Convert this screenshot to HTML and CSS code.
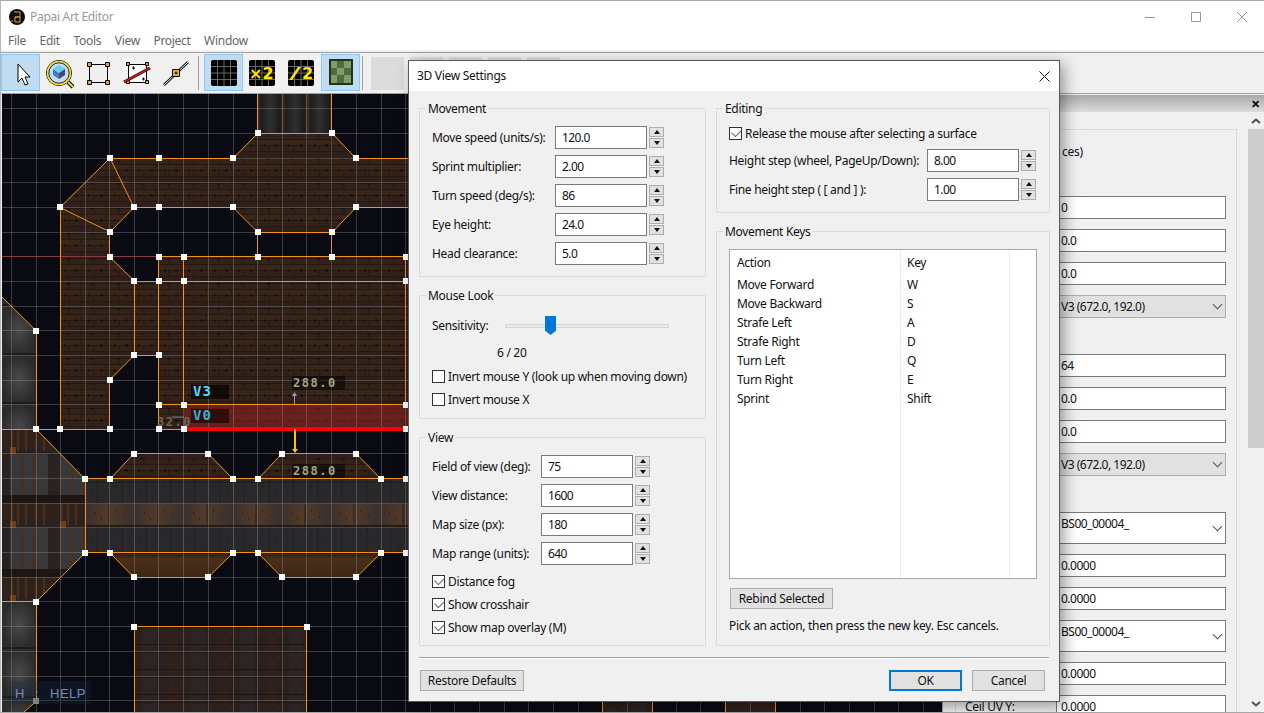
FILE: index.html
```html
<!DOCTYPE html>
<html lang="en">

<head>
    <meta charset="UTF-8">
    <link rel="stylesheet" href="styles.css">
    <title>Papai Art Editor</title>
</head>

<body>
    <div class="app">
        <div class="titlebar">
            <svg class="app-icon" width="16" height="16" viewBox="0 0 16 16">
                <circle cx="8" cy="8" r="8" fill="#0c0c0c" />
                <path d="M5 3h6v5h-5v5h5M6 8h5v5" fill="none" stroke="#d8a52a" stroke-width="1" />
                <path d="M2 12h2" stroke="#b03020" stroke-width="2" />
            </svg>
            <span class="app-name">Papai Art Editor</span>
            <div class="caption">
                <svg width="10" height="10" viewBox="0 0 10 10"><path d="M0 5.500h10" stroke="#999" /></svg>
                <svg width="10" height="10" viewBox="0 0 10 10"><path d="M.5.5h9v9h-9z" fill="none" stroke="#999" /></svg>
                <svg width="10" height="10" viewBox="0 0 10 10"><path d="M0 0l10 10M10 0L0 10" stroke="#999" /></svg>
            </div>
        </div>

        <div class="menubar">
            <span>File</span>
            <span>Edit</span>
            <span>Tools</span>
            <span>View</span>
            <span>Project</span>
            <span>Window</span>
        </div>

        <div class="toolbar">
            <div class="tool on">
                <svg viewBox="0 0 37 35"><path d="M16 9v18l4-4 3 7 3-1-3-7h5z" fill="#fff" stroke="#000" /></svg>
            </div>
            <div class="tool">
                <svg viewBox="0 0 37 35">
                    <path d="M27 27l5 5" stroke="#000" stroke-width="4" />
                    <path d="M27 27l5 5" stroke="#f4e01c" stroke-width="2" />
                    <circle cx="18" cy="18" r="12.500" fill="#c9d9ef" stroke="#000" />
                    <circle cx="18" cy="18" r="11.500" fill="none" stroke="#f4e01c" stroke-width="1.500" />
                    <circle cx="18" cy="18" r="10.200" fill="none" stroke="#000" stroke-width=".8" />
                    <path d="M18 10l6 3.500-6 4-6-4z" fill="#5fd0ee" />
                    <path d="M12 14l6 4v6l-6-4z" fill="#4a78c8" />
                    <path d="M24 14l-6 4v6l6-4z" fill="#3a4a80" />
                </svg>
            </div>
            <div class="tool">
                <svg viewBox="0 0 37 35">
                    <path d="M9.500 9.500h18v18h-18z" fill="#efefef" stroke="#000" />
                    <path d="M7.500 7.500h4v4h-4zM25.500 7.500h4v4h-4zM7.500 25.500h4v4h-4zM25.500 25.500h4v4h-4z" fill="#f0a020" stroke="#000" />
                </svg>
            </div>
            <div class="tool">
                <svg viewBox="0 0 37 35">
                    <path d="M9.500 9.500h18v18h-18z" fill="#fff" stroke="#000" />
                    <path d="M7.500 7.500h3v3h-3zM26.500 7.500h3v3h-3zM7.500 25.500h3v3h-3zM26.500 25.500h3v3h-3z" fill="#f0a020" stroke="#000" />
                    <path d="M5 27l26-14" stroke="#111" stroke-width="3" />
                    <path d="M5 27l26-14" stroke="#d01818" stroke-width="1.600" />
                    <path d="M13 13h3M14.500 11.500v3M23 24h3M24.500 22.500v3" stroke="#000" />
                </svg>
            </div>
            <div class="tool">
                <svg viewBox="0 0 37 35">
                    <path d="M6 30L30 7" stroke="#111" stroke-width="2.500" />
                    <path d="M6 30L30 7" stroke="#eee" stroke-width="1" />
                    <path d="M14.500 14.500h7v7h-7z" fill="#f0b020" stroke="#000" />
                    <path d="M16.500 18h3M18 16.500v3" stroke="#000" />
                </svg>
            </div>
            <div class="tool-sep"></div>
            <div class="tool on">
                <svg viewBox="0 0 37 35">
                    <rect x="6" y="5" width="26" height="26" rx="2" fill="#000" />
                    <path d="M12.500 5v26M19 5v26M25.500 5v26M6 11.500h26M6 18h26M6 24.500h26" stroke="#666" />
                </svg>
            </div>
            <div class="tool">
                <svg viewBox="0 0 37 35">
                    <rect x="5" y="5" width="26" height="26" rx="2" fill="#000" />
                    <path d="M11.500 5v26M18 5v26M24.500 5v26M5 11.500h26M5 18h26M5 24.500h26" stroke="#666" />
                    <text class="icon-num" x="5" y="24">×2</text>
                </svg>
            </div>
            <div class="tool">
                <svg viewBox="0 0 37 35">
                    <rect x="5" y="5" width="26" height="26" rx="2" fill="#000" />
                    <path d="M11.500 5v26M18 5v26M24.500 5v26M5 11.500h26M5 18h26M5 24.500h26" stroke="#666" />
                    <text class="icon-slash" transform="translate(6 24) scale(2.200 1)">/</text>
                    <text class="icon-num" x="19" y="24">2</text>
                </svg>
            </div>
            <div class="tool on">
                <svg viewBox="0 0 37 35">
                    <rect x="7" y="4" width="24" height="26" fill="#26301f" />
                    <rect x="9" y="6" width="20" height="22" fill="#7f9d6b" />
                    <path d="M15 6h7v7h-7zM22 13h7v7h-7zM15 20h7v8h-7zM9 13h6v7H9z" fill="#4f6c3d" />
                </svg>
            </div>
            <div class="tool-sep last"></div>
            <div class="tool-off"></div>
            <div class="tool-off"></div>
            <div class="tool-off"></div>
            <div class="tool-off"></div>
            <div class="tool-off"></div>
        </div>

        <div class="workspace">
            <svg class="map" width="940" height="618" viewBox="2 94 940 618">
                <defs>
                    <pattern id="brick" patternUnits="userSpaceOnUse" x="11" y="108" width="50" height="25">
                        <rect width="50" height="25" fill="#33221a" />
                        <rect y="6" width="50" height="6" fill="#38261b" />
                        <rect y="18" width="50" height="6" fill="#2f1f18" />
                        <path d="M0 .5h50M0 6.500h50M0 12.500h50M0 18.500h50" stroke="#261810" />
                        <path d="M8 0v6M33 0v6M20 6v6M45 6v6M8 12v6M33 12v6M20 18v7M45 18v7" stroke="#241610" />
                        <path d="M3 12.500h2M14 12.500h3M27 12.500h2M39 12.500h3M6 .5h3M30 .5h2" stroke="#160d08" stroke-width="2" />
                    </pattern>
                    <linearGradient id="rustband" x1="0" x2="1" y1="0" y2="0">
                        <stop offset="0" stop-color="#3a302c" />
                        <stop offset=".45" stop-color="#523a28" />
                        <stop offset="1" stop-color="#3a302e" />
                    </linearGradient>
                    <pattern id="metal" patternUnits="userSpaceOnUse" x="85" y="479" width="49" height="74">
                        <rect width="49" height="74" fill="#29292c" />
                        <rect y="25" width="49" height="24" fill="url(#rustband)" />
                        <rect y="3" width="49" height="1" fill="#1e1e20" />
                        <rect y="46" width="49" height="3" fill="#231a16" />
                        <rect y="71" width="49" height="3" fill="#33261e" />
                        <path d="M12 0v25M37 0v25M12 49v25M37 49v25M24 25v24" stroke="#1e1e20" />
                        <path d="M6 12h1M30 8h1M18 18h1M44 14h1M6 60h1M30 56h1M18 66h1M44 62h1M10 34h1M30 32h1M16 40h1M38 38h1" stroke="#0e0e0e" />
                    </pattern>
                    <pattern id="plate" patternUnits="userSpaceOnUse" x="2" y="429" width="50" height="74">
                        <rect width="50" height="74" fill="#292220" />
                        <rect x="8" y="25" width="38" height="42" fill="#38383a" />
                        <rect x="0" y="0" width="50" height="18" fill="#2e221b" />
                        <path d="M10 0v22M16 0v22M24 0v22M34 0v22M42 0v22M20 26v40M32 26v40" stroke="#4e2e1a" stroke-width="2" />
                        <rect x="8" y="18" width="6" height="7" fill="#6a4018" />
                        <rect y="66" width="50" height="8" fill="#1e1612" />
                    </pattern>
                    <radialGradient id="steelspot">
                        <stop offset="0" stop-color="#4a4a4c" />
                        <stop offset="1" stop-color="#2c2b2b" />
                    </radialGradient>
                    <pattern id="steel" patternUnits="userSpaceOnUse" x="2" y="306" width="34" height="49">
                        <rect width="34" height="49" fill="url(#steelspot)" />
                        <rect y="47" width="34" height="2" fill="#1c1c1c" />
                    </pattern>
                    <pattern id="dark" patternUnits="userSpaceOnUse" x="134" y="627" width="49" height="25">
                        <rect width="49" height="25" fill="#2a201d" />
                        <rect x="8" width="14" height="25" fill="#2b2625" />
                        <rect x="34" y="8" width="10" height="17" fill="#33201a" />
                        <path d="M0 .5h49M0 17.500h49" stroke="#1e1512" />
                        <path d="M0 6h49" stroke="#38211a" stroke-width="2" stroke-dasharray="4 5" />
                    </pattern>
                    <linearGradient id="pipe" x1="0" x2="1" y1="0" y2="0">
                        <stop offset="0" stop-color="#46301f" />
                        <stop offset=".12" stop-color="#1d1c1d" />
                        <stop offset=".5" stop-color="#2f2f31" />
                        <stop offset=".9" stop-color="#1b1a1b" />
                        <stop offset="1" stop-color="#46301f" />
                    </linearGradient>
                    <pattern id="pipes" patternUnits="userSpaceOnUse" x="258" y="94" width="24.670" height="39">
                        <rect width="24.670" height="39" fill="url(#pipe)" />
                    </pattern>
                    <linearGradient id="bumpdown" x1="0" x2="0" y1="0" y2="1">
                        <stop offset="0" stop-color="#2e1c10" />
                        <stop offset=".25" stop-color="#4a2e1a" />
                        <stop offset="1" stop-color="#3e2616" />
                    </linearGradient>
                </defs>

                <rect x="2" y="94" width="940" height="618" fill="#0a0b12" />

                <!-- sectors -->
                <rect x="258" y="94" width="74" height="39" fill="url(#pipes)" />
                <path fill="url(#brick)" d="M110 158H233L258 133H332L356 158H410V207H356L332 232H258L233 207H134L110 232L60 207Z" />
                <path fill="url(#brick)" d="M60 207L110 232V257L134 281V355L110 380V429H60Z" />
                <path fill="url(#brick)" d="M134 281H159V257H410V429H159V355H134Z" />
                <path fill="url(#steel)" d="M2 297L36 331V429H2Z" />
                <path fill="url(#plate)" d="M2 429H36L85 479V553L36 602H2Z" />
                <path fill="url(#steel)" d="M2 602H36V701L24 712H2Z" />
                <rect x="85" y="479" width="325" height="74" fill="url(#metal)" />
                <path fill="url(#brick)" d="M110 479L134 454H208L233 479ZM258 479L282 454H356L381 479Z" />
                <path fill="url(#bumpdown)" d="M110 553L134 577H208L233 553ZM258 553L282 577H356L381 553Z" />
                <rect x="134" y="627" width="173" height="85" fill="url(#dark)" />
                <rect x="603" y="694" width="49" height="18" fill="url(#dark)" />
                <rect x="725" y="694" width="50" height="18" fill="#33201a" />

                <!-- selected wall -->
                <rect x="184" y="405" width="226" height="24" fill="#8a2020" opacity=".6" />

                <!-- grid -->
                <path class="grid" d="M11.500 94V712M36.500 94V712M60.500 94V712M85.500 94V712M109.500 94V712M134.500 94V712M158.500 94V712M183.500 94V712M208.500 94V712M233.500 94V712M257.500 94V712M282.500 94V712M306.500 94V712M331.500 94V712M356.500 94V712M381.500 94V712M405.500 94V712M430.500 94V712M454.500 94V712M479.500 94V712M504.500 94V712M528.500 94V712M553.500 94V712M578.500 94V712M602.500 94V712M627.500 94V712M652.500 94V712M676.500 94V712M700.500 94V712M725.500 94V712M750.500 94V712M775.500 94V712M800.500 94V712M824.500 94V712M849.500 94V712M874.500 94V712M898.500 94V712M923.500 94V712M2 108.500H942M2 133.500H942M2 158.500H942M2 182.500H942M2 207.500H942M2 232.500H942M2 281.500H942M2 306.500H942M2 330.500H942M2 355.500H942M2 380.500H942M2 404.500H942M2 429.500H942M2 453.500H942M2 478.500H942M2 503.500H942M2 527.500H942M2 552.500H942M2 577.500H942M2 601.500H942M2 626.500H942M2 651.500H942M2 676.500H942M2 700.500H942" />
                <path class="axis" d="M2 256.500H159" />

                <!-- walls -->
                <path class="wall" d="M257.500 94V133.500H331.500V94M110 158.500H233L258 133M332 133L356 158.500H410M60 207.500L110 158L134 207.500H233L258 232.500H332L356 207.500H410M60 207.500L110 232L134 207.500M60.500 207V429.500H110M109.500 232V257L134.500 281V355L109.500 380V429M134 281.500H410M158.500 257V429.500M183.500 257V405M158 256.500H410M158 355.500H134M158 404.500H410M158 429.500H184M257.500 232V257M331.500 232V257M405.500 257V405" />
                <path class="wall" d="M2 297L36.500 331V429.500H2M36 429.500H60M36 429L85 479M85.500 479V553M85 478.500H410M85 552.500H410M36 602L85 553M2 601.500H36M36.500 602V701L24 712M110 479L134 453.500H208L233 479M258 479L282 453.500H356L381 479M110 553L134 577.500H208L233 553M258 553L282 577.500H356L381 553M134.500 712V626.500H306.500V712M602.500 700V712M652.500 700V712M725.500 700V712M775.500 700V712" />
                <rect x="186" y="427" width="224" height="4" fill="#ff0000" />

                <!-- vertices -->
                <path class="verts" d="M255 130h6v6h-6zM329 130h6v6h-6zM107 155h6v6h-6zM156 155h6v6h-6zM230 155h6v6h-6zM353 155h6v6h-6zM57 204h6v6h-6zM131 204h6v6h-6zM156 204h6v6h-6zM230 204h6v6h-6zM353 204h6v6h-6zM107 229h6v6h-6zM255 229h6v6h-6zM329 229h6v6h-6zM107 254h6v6h-6zM156 254h6v6h-6zM181 254h6v6h-6zM255 254h6v6h-6zM329 254h6v6h-6zM403 254h6v6h-6zM131 278h6v6h-6zM156 278h6v6h-6zM181 278h6v6h-6zM403 278h6v6h-6zM33 328h6v6h-6zM131 352h6v6h-6zM156 352h6v6h-6zM107 377h6v6h-6zM156 402h6v6h-6zM181 402h6v6h-6zM403 402h6v6h-6zM33 426h6v6h-6zM57 426h6v6h-6zM107 426h6v6h-6zM156 426h6v6h-6zM181 426h6v6h-6zM403 426h6v6h-6zM131 451h6v6h-6zM205 451h6v6h-6zM279 451h6v6h-6zM353 451h6v6h-6zM82 476h6v6h-6zM107 476h6v6h-6zM230 476h6v6h-6zM255 476h6v6h-6zM378 476h6v6h-6zM403 476h6v6h-6zM82 550h6v6h-6zM107 550h6v6h-6zM230 550h6v6h-6zM255 550h6v6h-6zM378 550h6v6h-6zM403 550h6v6h-6zM131 574h6v6h-6zM205 574h6v6h-6zM279 574h6v6h-6zM353 574h6v6h-6zM33 599h6v6h-6zM131 624h6v6h-6zM304 624h6v6h-6z" />

                <!-- helpers and labels -->
                <rect x="191" y="385" width="38" height="14" fill="#000" opacity=".65" />
                <rect x="191" y="409" width="38" height="14" fill="#000" opacity=".55" />
                <rect x="292" y="376" width="53" height="14" fill="#000" opacity=".5" />
                <rect x="292" y="464" width="53" height="14" fill="#000" opacity=".5" />
                <text class="tag tag-v" x="193" y="396">V3</text>
                <text class="tag tag-v dim" x="193" y="420">V0</text>
                <text class="tag tag-len" x="293" y="387">288.0</text>
                <text class="tag tag-len" x="293" y="475">288.0</text>
                <text class="tag tag-len faint" x="157" y="426">32.0</text>
                <path d="M294.500 404V393" stroke="#9a94d0" />
                <path d="M292 396l2.500-4 2.500 4z" fill="#9a94d0" />
                <path d="M172 417h12" stroke="#7c7c90" />
                <path d="M295 429V452" stroke="#ffc400" stroke-width="2" />
                <path d="M292 449h6l-3 4z" fill="#ffc400" />
                <rect x="10" y="681" width="81" height="23" fill="#1a2a4a" opacity=".3" />
                <path d="M33 698h6v6h-6z" fill="#808080" />
                <text class="help" y="698"><tspan x="15">H</tspan> <tspan x="35">:</tspan> <tspan x="50">HELP</tspan></text>
            </svg>

            <div class="panel">
                <div class="dock-title"><span>✕</span></div>
                <div class="dock-body">
                    <div class="props">
                        <div class="props-note">ces)</div>
                        <div class="prop"><span class="prop-label"></span><div class="prop-field">0</div></div>
                        <div class="prop"><span class="prop-label"></span><div class="prop-field">0.0</div></div>
                        <div class="prop"><span class="prop-label"></span><div class="prop-field">0.0</div></div>
                        <div class="prop"><span class="prop-label"></span><div class="prop-field grey">V3 (672.0, 192.0)<i class="chev"></i></div></div>
                        <div class="prop"><span class="prop-label"></span><div class="prop-field">64</div></div>
                        <div class="prop"><span class="prop-label"></span><div class="prop-field">0.0</div></div>
                        <div class="prop"><span class="prop-label"></span><div class="prop-field">0.0</div></div>
                        <div class="prop"><span class="prop-label"></span><div class="prop-field grey">V3 (672.0, 192.0)<i class="chev"></i></div></div>
                        <div class="prop"><span class="prop-label"></span><div class="prop-field tall">BS00_00004_<i class="chev"></i></div></div>
                        <div class="prop"><span class="prop-label"></span><div class="prop-field">0.0000</div></div>
                        <div class="prop"><span class="prop-label"></span><div class="prop-field">0.0000</div></div>
                        <div class="prop"><span class="prop-label"></span><div class="prop-field tall">BS00_00004_<i class="chev"></i></div></div>
                        <div class="prop"><span class="prop-label"></span><div class="prop-field">0.0000</div></div>
                        <div class="prop"><span class="prop-label">Ceil UV Y:</span><div class="prop-field">0.0000</div></div>
                    </div>
                    <div class="scrollbar">
                        <div class="scroll-btn">
                            <svg width="10" height="6" viewBox="0 0 10 6"><path d="M1 5l4-3.500L9 5" fill="none" stroke="#505050" stroke-width="2" /></svg>
                        </div>
                        <div class="scroll-thumb"></div>
                        <div class="scroll-btn end">
                            <svg width="10" height="6" viewBox="0 0 10 6"><path d="M1 1l4 3.500L9 1" fill="none" stroke="#505050" stroke-width="2" /></svg>
                        </div>
                    </div>
                </div>
            </div>
        </div>
    </div>

    <div class="dialog">
        <div class="dialog-title">
            <span>3D View Settings</span>
            <svg width="11" height="11" viewBox="0 0 11 11"><path d="M.5.5l10 10M10.500.5l-10 10" stroke="#111" /></svg>
        </div>

        <div class="dialog-body">
            <div class="col-left">
                <div class="group movement">
                    <div class="group-title">Movement</div>
                    <div class="spin-rows">
                        <div class="spin-row"><span class="spin-label">Move speed (units/s):</span><div class="field">120.0</div><div class="spin"><b class="up"></b><b class="down"></b></div></div>
                        <div class="spin-row"><span class="spin-label">Sprint multiplier:</span><div class="field">2.00</div><div class="spin"><b class="up"></b><b class="down"></b></div></div>
                        <div class="spin-row"><span class="spin-label">Turn speed (deg/s):</span><div class="field">86</div><div class="spin"><b class="up"></b><b class="down"></b></div></div>
                        <div class="spin-row"><span class="spin-label">Eye height:</span><div class="field">24.0</div><div class="spin"><b class="up"></b><b class="down"></b></div></div>
                        <div class="spin-row"><span class="spin-label">Head clearance:</span><div class="field">5.0</div><div class="spin"><b class="up"></b><b class="down"></b></div></div>
                    </div>
                </div>

                <div class="group mouselook">
                    <div class="group-title">Mouse Look</div>
                    <div class="slider-row">
                        <span class="slider-label">Sensitivity:</span>
                        <div class="slider"><div class="slider-thumb"></div></div>
                    </div>
                    <div class="slider-value">6 / 20</div>
                    <div class="checks">
                        <label class="check-row"><i class="check"></i>Invert mouse Y (look up when moving down)</label>
                        <label class="check-row"><i class="check"></i>Invert mouse X</label>
                    </div>
                </div>

                <div class="group view">
                    <div class="group-title">View</div>
                    <div class="spin-rows">
                        <div class="spin-row"><span class="spin-label">Field of view (deg):</span><div class="field">75</div><div class="spin"><b class="up"></b><b class="down"></b></div></div>
                        <div class="spin-row"><span class="spin-label">View distance:</span><div class="field">1600</div><div class="spin"><b class="up"></b><b class="down"></b></div></div>
                        <div class="spin-row"><span class="spin-label">Map size (px):</span><div class="field">180</div><div class="spin"><b class="up"></b><b class="down"></b></div></div>
                        <div class="spin-row"><span class="spin-label">Map range (units):</span><div class="field">640</div><div class="spin"><b class="up"></b><b class="down"></b></div></div>
                    </div>
                    <div class="checks">
                        <label class="check-row"><i class="check on"></i>Distance fog</label>
                        <label class="check-row"><i class="check on"></i>Show crosshair</label>
                        <label class="check-row"><i class="check on"></i>Show map overlay (M)</label>
                    </div>
                </div>
            </div>

            <div class="col-right">
                <div class="group editing">
                    <div class="group-title">Editing</div>
                    <label class="check-row release"><i class="check on"></i>Release the mouse after selecting a surface</label>
                    <div class="spin-rows">
                        <div class="spin-row"><span class="spin-label">Height step (wheel, PageUp/Down):</span><div class="field">8.00</div><div class="spin"><b class="up"></b><b class="down"></b></div></div>
                        <div class="spin-row"><span class="spin-label">Fine height step ( [ and ] ):</span><div class="field">1.00</div><div class="spin"><b class="up"></b><b class="down"></b></div></div>
                    </div>
                </div>

                <div class="group keys">
                    <div class="group-title">Movement Keys</div>
                    <div class="keylist">
                        <div class="key-col action">
                            <div class="key-head">Action</div>
                            <div>Move Forward</div>
                            <div>Move Backward</div>
                            <div>Strafe Left</div>
                            <div>Strafe Right</div>
                            <div>Turn Left</div>
                            <div>Turn Right</div>
                            <div>Sprint</div>
                        </div>
                        <div class="key-col bind">
                            <div class="key-head">Key</div>
                            <div>W</div>
                            <div>S</div>
                            <div>A</div>
                            <div>D</div>
                            <div>Q</div>
                            <div>E</div>
                            <div>Shift</div>
                        </div>
                        <div class="key-col"></div>
                    </div>
                    <div class="btn rebind">Rebind Selected</div>
                    <div class="keys-hint">Pick an action, then press the new key. Esc cancels.</div>
                </div>
            </div>
        </div>

        <div class="dialog-line"></div>

        <div class="dialog-foot">
            <div class="btn restore">Restore Defaults</div>
            <div class="foot-right">
                <div class="btn ok">OK</div>
                <div class="btn cancel">Cancel</div>
            </div>
        </div>
    </div>
</body>

</html>
```

FILE: styles.css
```css
* {
    margin: 0;
    padding: 0;
    box-sizing: border-box;
}

body {
    width: 1264px;
    height: 713px;
    position: relative;
    overflow: hidden;
    background: #f0f0f0;
    font-family: "Noto Sans", "Liberation Sans", sans-serif;
    font-size: 12px;
    line-height: 16px;
    letter-spacing: -.3px;
    color: #111;
}

.app {
    height: 713px;
    display: flex;
    flex-direction: column;
    border-top: 1px solid #a8a8a8;
    border-left: 1px solid #b8b8b8;
    border-bottom: 1px solid #a8a8a8;
}

/* window chrome */
.titlebar {
    height: 32px;
    flex: none;
    display: flex;
    align-items: center;
    padding-left: 8px;
    background: #fff;
}

.app-name {
    margin-left: 5px;
    color: #999;
}

.caption {
    margin-left: auto;
    display: flex;
    gap: 36px;
    padding-right: 17px;
}

.menubar {
    height: 19px;
    flex: none;
    display: flex;
    gap: 13.600px;
    padding: 0 0 0 7px;
    background: #fff;
    border-bottom: 2px solid #f0f0f0;
    color: #666;
}

.toolbar {
    height: 42px;
    flex: none;
    display: flex;
    align-items: flex-start;
    padding-top: 1px;
    background: #f0f0f0;
    border-top: 1px solid #a0a0a0;
    border-bottom: 1px solid #a0a0a0;
}

.tool {
    width: 39px;
    height: 37px;
    flex: none;
    border: 1px solid transparent;
}

.tool svg {
    display: block;
    width: 37px;
    height: 35px;
}

.tool.on {
    background: #bfdcf3;
    border-color: #8fc8f0;
}

.tool-sep {
    width: 1px;
    height: 34px;
    margin: 2px 5px 0 2px;
    background: #a0a0a0;
}

.tool-sep.last {
    margin: 2px 8px 0 2px;
}

.tool-off {
    width: 33px;
    height: 33px;
    margin: 3px 6px 0 0;
    flex: none;
    background: #dcdcdc;
}

.icon-num {
    font-family: "DejaVu Sans", sans-serif;
    font-size: 16px;
    font-weight: 700;
    letter-spacing: 0;
    fill: #ffe600;
}

.icon-slash {
    font-family: "DejaVu Sans", sans-serif;
    font-size: 16px;
    fill: #ffe600;
}

/* map */
.workspace {
    flex: 1;
    display: flex;
    padding-left: 1px;
    min-height: 0;
}

.map {
    display: block;
    flex: none;
}

.grid {
    fill: none;
    stroke: rgba(160, 160, 160, .33);
}

.axis {
    stroke: #8a3a44;
}

.wall {
    fill: none;
    stroke: #f0941c;
}

.verts {
    fill: #fff;
}

.tag {
    font-family: "DejaVu Sans Mono", monospace;
    font-size: 12px;
    letter-spacing: 0;
}

.tag-v {
    font-weight: 700;
    font-size: 14px;
    letter-spacing: 1px;
    fill: #55d8ff;
}

.tag-v.dim {
    fill: #3fb0cc;
}

.tag-len {
    font-weight: 700;
    letter-spacing: 1.500px;
    fill: #a5a583;
}

.tag-len.faint {
    fill: #6c6850;
}

.help {
    font-family: "Liberation Sans", sans-serif;
    font-size: 13px;
    letter-spacing: .5px;
    fill: #6f8fc8;
}

/* dock on the right */
.panel {
    flex: 1;
    display: flex;
    flex-direction: column;
    border-left: 1px solid #a0a0a0;
    padding-top: 1px;
    min-width: 0;
}

.dock-title {
    height: 17px;
    flex: none;
    display: flex;
    justify-content: flex-end;
    align-items: center;
    padding-right: 4px;
    background: linear-gradient(#a8a8a8, #dcdcdc);
    font-size: 11px;
    font-weight: 700;
    color: #000;
}

.dock-body {
    flex: 1;
    display: flex;
    min-height: 0;
}

.props {
    width: 294px;
    margin: 17px 11px 0 12px;
    padding: 0 10px 0 0;
    border: 1px solid #dcdcdc;
    border-bottom: 0;
    overflow: hidden;
}

.props-note {
    margin: 14px 0 36px 106px;
}

.prop {
    display: flex;
    margin-bottom: 10px;
}

.prop-label {
    width: 100px;
    flex: none;
    padding-left: 9px;
    line-height: 23px;
}

.prop-field {
    flex: 1;
    height: 23px;
    position: relative;
    padding-left: 4px;
    line-height: 21px;
    letter-spacing: -.5px;
    background: #fff;
    border: 1px solid #7a7a7a;
}

.prop-field.grey {
    background: #e1e1e1;
    border-color: #adadad;
    margin-bottom: 26px;
}

.prop-field.tall {
    height: 32px;
}

.chev {
    position: absolute;
    right: 4px;
    top: 5px;
    width: 7px;
    height: 7px;
    border: solid #555;
    border-width: 0 1px 1px 0;
    transform: rotate(45deg);
}

.tall .chev {
    top: 10px;
}

.scrollbar {
    width: 16px;
    flex: none;
    display: flex;
    flex-direction: column;
    background: #f0f0f0;
}

.scroll-btn {
    height: 17px;
    flex: none;
    display: flex;
    align-items: center;
    justify-content: center;
}

.scroll-btn.end {
    margin-top: auto;
}

.scroll-thumb {
    height: 319px;
    background: #cdcdcd;
}

/* settings dialog */
.dialog {
    position: absolute;
    left: 408px;
    top: 60px;
    width: 652px;
    height: 642px;
    background: #f0f0f0;
    border: 1px solid #5a5a5a;
    box-shadow: 4px 4px 14px rgba(0, 0, 0, .38);
}

.dialog-title {
    height: 30px;
    display: flex;
    align-items: center;
    justify-content: space-between;
    padding: 0 9px 0 8px;
    background: #fff;
}

.dialog-body {
    display: flex;
    gap: 10px;
    padding: 17px 0 0 10px;
}

.col-left,
.col-right {
    display: flex;
    flex-direction: column;
    gap: 18px;
}

.col-left {
    width: 287px;
}

.col-right {
    width: 334px;
}

.group {
    border: 1px solid #dcdcdc;
    padding: 0 0 11px 12px;
}

.mouselook {
    padding-bottom: 12px;
}

.group-title {
    width: max-content;
    margin: -8px 0 9px -6px;
    padding: 0 2px;
    background: #f0f0f0;
}

.spin-rows {
    display: flex;
    flex-direction: column;
    gap: 6px;
}

.spin-row {
    display: flex;
    align-items: center;
}

.spin-label {
    width: 123px;
    flex: none;
    white-space: nowrap;
}

.view .spin-label {
    width: 109px;
}

.editing .spin-label {
    width: 198px;
}

.field {
    width: 92px;
    height: 23px;
    padding-left: 6px;
    line-height: 21px;
    letter-spacing: -.6px;
    background: #fff;
    border: 1px solid #7a7a7a;
}

.spin {
    width: 15px;
    margin-left: 2px;
    display: flex;
    flex-direction: column;
    gap: 1px;
}

.spin b {
    height: 10px;
    display: flex;
    align-items: center;
    justify-content: center;
    background: #e1e1e1;
    border: 1px solid #adadad;
}

.spin b::after {
    content: "";
    border-left: 3.500px solid transparent;
    border-right: 3.500px solid transparent;
}

.spin .up::after {
    border-bottom: 4px solid #111;
}

.spin .down::after {
    border-top: 4px solid #111;
}

.slider-row {
    display: flex;
    align-items: center;
    height: 20px;
    margin-top: 12px;
}

.slider-label {
    width: 73px;
    flex: none;
}

.slider {
    width: 164px;
    height: 4px;
    position: relative;
    background: #e7eaea;
    border: 1px solid #d6d6d6;
}

.slider-thumb {
    position: absolute;
    left: 39px;
    top: -9px;
    width: 11px;
    height: 19px;
    background: #0078d7;
    clip-path: polygon(0 0, 100% 0, 100% 78%, 50% 100%, 0 78%);
}

.slider-value {
    margin: 9px 0 0 65px;
}

.checks {
    display: flex;
    flex-direction: column;
    gap: 10px;
    margin-top: 9px;
}

.view .checks {
    margin-top: 10px;
}

.check-row {
    height: 13px;
    display: flex;
    align-items: center;
    gap: 3px;
    white-space: nowrap;
}

.check {
    width: 13px;
    height: 13px;
    flex: none;
    position: relative;
    background: #fff;
    border: 1px solid #333;
}

.check.on::after {
    content: "";
    position: absolute;
    left: 2px;
    top: 1px;
    width: 8px;
    height: 5px;
    border: solid #666;
    border-width: 0 0 1.500px 1.500px;
    transform: rotate(-45deg);
}

.release {
    margin: 10px 0 9px;
}

.keylist {
    width: 308px;
    height: 330px;
    display: flex;
    background: #fff;
    border: 1px solid #a8a8a8;
}

.key-col {
    flex: 1;
    line-height: 19px;
    white-space: nowrap;
}

.key-col.action {
    flex: none;
    width: 171px;
    padding-left: 7px;
    border-right: 1px solid #e5f0fb;
}

.key-col.bind {
    flex: none;
    width: 109px;
    padding-left: 6px;
    border-right: 1px solid #e5f0fb;
}

.key-head {
    height: 25px;
    line-height: 26px;
}

.btn {
    height: 21px;
    display: flex;
    align-items: center;
    justify-content: center;
    background: #e1e1e1;
    border: 1px solid #adadad;
}

.rebind {
    width: 103px;
    margin: 9px 0 0 1px;
}

.keys-hint {
    margin-top: 9px;
}

.dialog-line {
    height: 2px;
    margin: 11px 10px 0;
    background: #a0a0a0;
    border-bottom: 1px solid #fff;
}

.dialog-foot {
    display: flex;
    justify-content: space-between;
    padding: 11px 14px 0 11px;
}

.restore {
    width: 104px;
}

.foot-right {
    display: flex;
    gap: 10px;
}

.ok,
.cancel {
    width: 73px;
}

.ok {
    border: 2px solid #0078d7;
}
```
